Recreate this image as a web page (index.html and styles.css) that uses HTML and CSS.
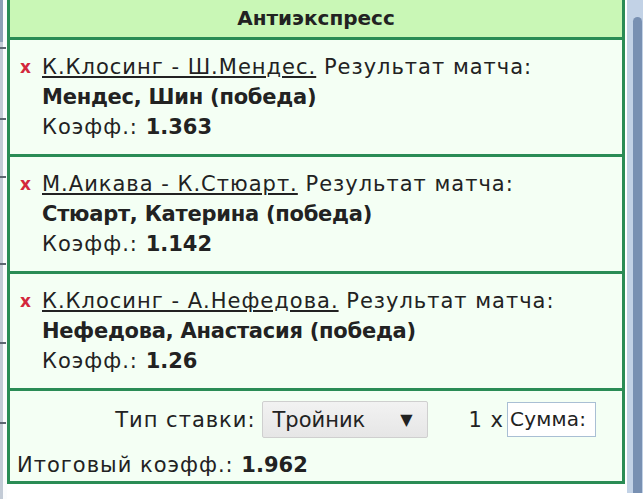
FILE: index.html
```html
<!DOCTYPE html>
<html lang="ru">
<head>
<meta charset="utf-8">
<link rel="stylesheet" href="styles.css">
</head>
<body>
<div class="screen">
  <div class="gutter">
    <span class="tick t1"></span><span class="tick t2"></span><span class="tick t3"></span>
    <span class="tick t4"></span><span class="tick t5"></span><span class="tick t6"></span>
  </div>
  <div class="panel">
    <div class="head">Антиэкспресс</div>
    <div class="item">
      <span class="del">x</span>
      <div class="body">
        <div class="line"><a class="ev">К.Клосинг - Ш.Мендес.</a> Результат матча:</div>
        <div class="line pick">Мендес, Шин (победа)</div>
        <div class="line">Коэфф.: <b>1.363</b></div>
      </div>
    </div>
    <div class="item">
      <span class="del">x</span>
      <div class="body">
        <div class="line"><a class="ev">М.Аикава - К.Стюарт.</a> Результат матча:</div>
        <div class="line pick">Стюарт, Катерина (победа)</div>
        <div class="line">Коэфф.: <b>1.142</b></div>
      </div>
    </div>
    <div class="item">
      <span class="del">x</span>
      <div class="body">
        <div class="line"><a class="ev">К.Клосинг - А.Нефедова.</a> Результат матча:</div>
        <div class="line pick">Нефедова, Анастасия (победа)</div>
        <div class="line">Коэфф.: <b>1.26</b></div>
      </div>
    </div>
    <div class="foot">
      <div class="row1">
        <span class="lbl">Тип ставки:</span>
        <div class="select"><span>Тройник</span><span class="arrow">▼</span></div>
        <span class="mult">1 x</span>
        <div class="input">Сумма:</div>
      </div>
      <div class="total">Итоговый коэфф.: <b>1.962</b></div>
    </div>
  </div>
  <div class="scroll"><div class="thumb"></div></div>
</div>
</body>
</html>
```
FILE: styles.css
```css
* { box-sizing: border-box; }
html, body { margin: 0; padding: 0; background: #ffffff; }
body {
  font-family: "DejaVu Sans", Roboto, sans-serif;
  color: #222222;
  font-size: 21px;
  letter-spacing: 1px;
}
b { letter-spacing: 0; }
.screen {
  display: flex;
  width: 643px;
  height: 499px;
  align-items: flex-start;
}
.gutter {
  position: relative;
  width: 7px;
  height: 499px;
  flex: none;
  background: linear-gradient(to right, #c3cbd6 0, #c3cbd6 3px, #fbfcfd 3px);
}
.gutter::before {
  content: "";
  position: absolute;
  left: 0; top: 0;
  width: 3px; height: 42px;
  background: #8d9fb6;
}
.tick {
  position: absolute;
  left: 0;
  width: 6px;
  height: 2px;
  background: #5c6670;
}
.t1 { top: 47px; }
.t2 { top: 118px; }
.t3 { top: 176px; }
.t4 { top: 263px; }
.t5 { top: 342px; }
.t6 { top: 422px; }
.panel {
  width: 618px;
  flex: none;
  border-left: 3px solid #2a8c55;
  border-right: 3px solid #2a8c55;
  border-bottom: 3px solid #2a8c55;
  background: #f4fff4;
}
.head {
  height: 40px;
  line-height: 37px;
  text-align: center;
  font-weight: bold;
  font-size: 20px;
  letter-spacing: 0;
  background: #c9f7b6;
  border-bottom: 3px solid #2a8c55;
}
.item {
  display: flex;
  padding: 12px 10px 12px 10px;
  border-bottom: 3px solid #2a8c55;
}
.del {
  width: 22px;
  flex: none;
  line-height: 30px;
  color: #d3283c;
  font-weight: bold;
  font-size: 17px;
  letter-spacing: 0;
}
.body { flex: 1; }
.line {
  line-height: 30px;
  height: 30px;
  white-space: nowrap;
}
.ev {
  color: #222222;
  text-decoration: underline;
  text-underline-offset: 2px;
}
.pick { font-weight: bold; letter-spacing: -0.25px; }
.foot {
  padding: 10px 0 1px 7px;
}
.row1 {
  display: flex;
  align-items: center;
  justify-content: flex-end;
  height: 37px;
  padding-right: 26px;
}
.lbl { margin-right: 6px; }
.select {
  display: flex;
  align-items: center;
  justify-content: space-between;
  width: 166px;
  height: 37px;
  padding: 0 14px 0 10px;
  background: linear-gradient(#f2f2f2, #e6e6e6);
  border: 1px solid #cfcfcf;
  border-radius: 2px;
  letter-spacing: 0;
}
.arrow { font-size: 16px; }
.mult { margin-left: 41px; margin-right: 3px; }
.input {
  width: 89px;
  height: 35px;
  line-height: 33px;
  padding-left: 2px;
  background: #ffffff;
  border: 1px solid #a9bfd4;
  overflow: hidden;
  white-space: nowrap;
  font-size: 20px;
  letter-spacing: 0.2px;
}
.total {
  margin-top: 12px;
  line-height: 30px;
  height: 30px;
}
.scroll {
  width: 16px;
  height: 493px;
  margin-left: 2px;
  flex: none;
  padding-top: 17px;
  padding-left: 6px;
  background: #c2d2e6;
}
.thumb {
  width: 9px;
  height: 476px;
  border-radius: 5px 5px 0 0;
  background: #7890b2;
}
```
